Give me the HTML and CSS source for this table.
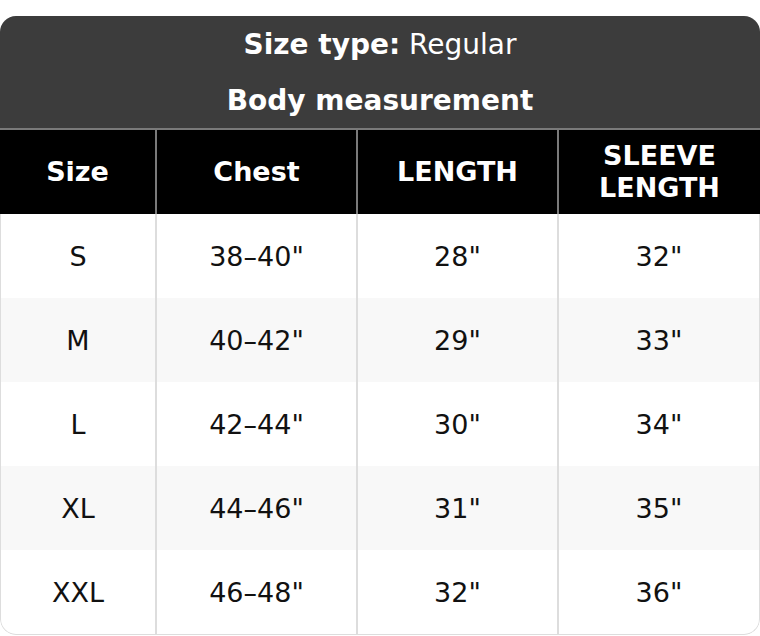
FILE: index.html
```html
<!DOCTYPE html>
<html>
<head>
<meta charset="utf-8">
<link rel="stylesheet" href="styles.css">
</head>
<body>
<div class="card">
  <div class="title">
    <div class="title-line"><b>Size type:</b>&nbsp;Regular</div>
    <div class="title-line"><b>Body measurement</b></div>
  </div>
  <div class="grid head">
    <div class="cell">Size</div>
    <div class="cell">Chest</div>
    <div class="cell">LENGTH</div>
    <div class="cell">SLEEVE<br>LENGTH</div>
  </div>
  <div class="body">
    <div class="grid row">
      <div class="cell">S</div><div class="cell">38–40"</div><div class="cell">28"</div><div class="cell">32"</div>
    </div>
    <div class="grid row alt">
      <div class="cell">M</div><div class="cell">40–42"</div><div class="cell">29"</div><div class="cell">33"</div>
    </div>
    <div class="grid row">
      <div class="cell">L</div><div class="cell">42–44"</div><div class="cell">30"</div><div class="cell">34"</div>
    </div>
    <div class="grid row alt">
      <div class="cell">XL</div><div class="cell">44–46"</div><div class="cell">31"</div><div class="cell">35"</div>
    </div>
    <div class="grid row">
      <div class="cell">XXL</div><div class="cell">46–48"</div><div class="cell">32"</div><div class="cell">36"</div>
    </div>
  </div>
</div>
</body>
</html>
```
FILE: styles.css
```css
html, body {
  margin: 0;
  padding: 0;
  background: #ffffff;
}
body {
  padding-top: 16px;
  font-family: "DejaVu Sans", Verdana, sans-serif;
  font-size: 27px;
}
.card {
  width: 760px;
  border-radius: 16px;
  overflow: hidden;
  background: #ffffff;
}
.title {
  background: #3c3c3c;
  color: #ffffff;
  border-bottom: 2px solid #7a7a7a;
  font-size: 28px;
}
.title-line {
  height: 56px;
  display: flex;
  align-items: center;
  justify-content: center;
  white-space: pre;
}
.title-line b {
  font-weight: bold;
}
.grid {
  display: grid;
  grid-template-columns: 155px 201px 201px 1fr;
}
.cell {
  display: flex;
  align-items: center;
  justify-content: center;
  text-align: center;
  box-sizing: border-box;
}
.grid .cell + .cell {
  border-left: 2px solid #dddddd;
}
.head {
  background: #000000;
  color: #ffffff;
  font-weight: bold;
  height: 84px;
  line-height: 1.2;
}
.head .cell + .cell {
  border-left-color: #7a7a7a;
}
.body {
  border: 1px solid #dddddd;
  border-top: none;
  border-radius: 0 0 16px 16px;
  color: #111111;
}
.row {
  height: 84px;
  grid-template-columns: 154px 201px 201px 1fr;
}
.alt {
  background: #f8f8f8;
}
```
